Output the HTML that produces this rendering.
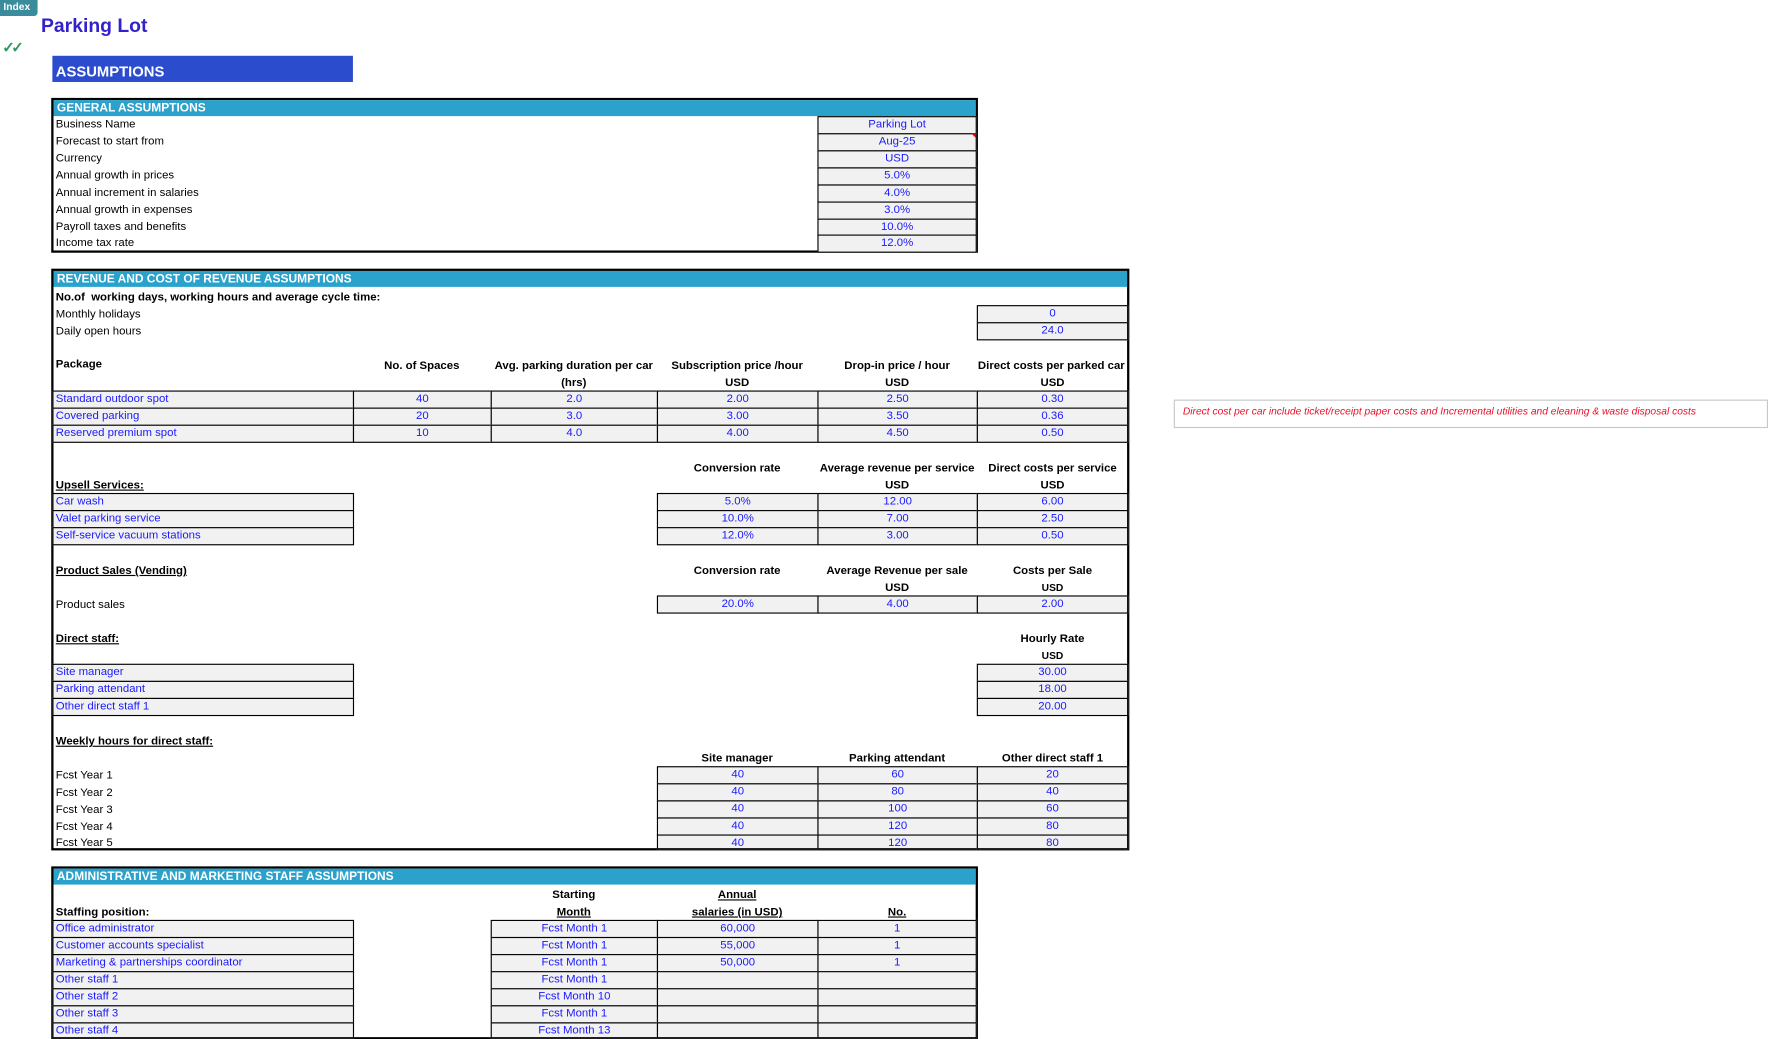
<!DOCTYPE html>
<html><head><meta charset="utf-8">
<style>
html,body{margin:0;padding:0;background:#fff;width:1776px;height:1039px;overflow:hidden}
#w{position:absolute;left:0;top:0;width:1560px;height:913px;transform:scale(1.13846);transform-origin:0 0;font-family:"Liberation Sans",Arial,sans-serif;font-size:10px;color:#000}
.a{position:absolute;white-space:nowrap}
.t{position:absolute;white-space:nowrap;line-height:15px;font-size:10px}
.b{font-weight:bold}
.u{text-decoration:underline}
.hc{position:absolute;white-space:nowrap;line-height:15px;font-weight:bold;text-align:center;font-size:10px}
.c{position:absolute;box-sizing:border-box;border:1px solid #000;background:#f1f1f1;color:#1a1aff;text-align:center;line-height:14px;height:16px;font-size:10px;white-space:nowrap;overflow:hidden}
.l{text-align:left;padding-left:2px}
.tb{position:absolute;box-sizing:border-box;border:2px solid #000}
.hd{position:absolute;background:#2aa2cc;color:#fff;font-weight:bold;font-size:10.5px;line-height:14px;padding-left:3px;box-sizing:border-box;height:14px}
</style></head><body><div id="w">
<div class="a" style="left:0;top:0;width:33px;height:14px;background:#3a8c9c;border-radius:0 0 3px 0;color:#fff;font-weight:bold;font-size:9px;line-height:13px;padding-left:3px;box-sizing:border-box">Index</div>
<div class="a" style="left:36px;top:13px;font-size:17px;font-weight:bold;color:#3322cc">Parking Lot</div>
<div class="a" style="left:2px;top:34px;font-size:13px;color:#2a9a5a;font-weight:bold;letter-spacing:-3px">✓✓</div>
<div class="a" style="left:46px;top:49px;width:264px;height:23px;background:#2b4ccc;color:#fff;font-weight:bold;font-size:13px;line-height:28px;padding-left:3px;box-sizing:border-box">ASSUMPTIONS</div>

<!-- General -->
<div class="tb" style="left:45px;top:86px;width:814px;height:136px"></div>
<div class="hd" style="left:47px;top:88px;width:810px">GENERAL ASSUMPTIONS</div>
<div class="t" style="left:49px;top:102px">Business Name</div>
<div class="t" style="left:49px;top:117px">Forecast to start from</div>
<div class="t" style="left:49px;top:132px">Currency</div>
<div class="t" style="left:49px;top:147px">Annual growth in prices</div>
<div class="t" style="left:49px;top:162px">Annual increment in salaries</div>
<div class="t" style="left:49px;top:177px">Annual growth in expenses</div>
<div class="t" style="left:49px;top:192px">Payroll taxes and benefits</div>
<div class="t" style="left:49px;top:206px">Income tax rate</div>
<div class="c" style="left:718px;top:102px;width:140px">Parking Lot</div>
<div class="c" style="left:718px;top:117px;width:140px">Aug-25</div>
<div class="a" style="left:853px;top:117px;width:0;height:0;border-left:4px solid transparent;border-top:4px solid #d00"></div>
<div class="c" style="left:718px;top:132px;width:140px">USD</div>
<div class="c" style="left:718px;top:147px;width:140px">5.0%</div>
<div class="c" style="left:718px;top:162px;width:140px">4.0%</div>
<div class="c" style="left:718px;top:177px;width:140px">3.0%</div>
<div class="c" style="left:718px;top:192px;width:140px">10.0%</div>
<div class="c" style="left:718px;top:206px;width:140px">12.0%</div>

<!-- Revenue -->
<div class="tb" style="left:45px;top:236px;width:947px;height:511px"></div>
<div class="hd" style="left:47px;top:238px;width:943px">REVENUE AND COST OF REVENUE ASSUMPTIONS</div>
<div class="t b" style="left:49px;top:254px">No.of &nbsp;working days, working hours and average cycle time:</div>
<div class="t" style="left:49px;top:269px">Monthly holidays</div>
<div class="t" style="left:49px;top:284px">Daily open hours</div>
<div class="c" style="left:858px;top:268px;width:133px">0</div>
<div class="c" style="left:858px;top:283px;width:133px">24.0</div>

<div class="t b" style="left:49px;top:313px">Package</div>
<div class="hc" style="left:310px;top:314px;width:121px">No. of Spaces</div>
<div class="hc" style="left:421px;top:314px;width:166px">Avg. parking duration per car</div>
<div class="hc" style="left:431px;top:329px;width:146px">(hrs)</div>
<div class="hc" style="left:577px;top:314px;width:141px">Subscription price /hour</div>
<div class="hc" style="left:577px;top:329px;width:141px">USD</div>
<div class="hc" style="left:718px;top:314px;width:140px">Drop-in price / hour</div>
<div class="hc" style="left:718px;top:329px;width:140px">USD</div>
<div class="hc" style="left:858px;top:314px;width:133px;overflow:hidden;text-align:left;padding-left:1px">Direct costs per parked car</div>
<div class="hc" style="left:858px;top:329px;width:133px">USD</div>

<div class="c l" style="left:46px;top:343px;width:265px">Standard outdoor spot</div>
<div class="c l" style="left:46px;top:358px;width:265px">Covered parking</div>
<div class="c l" style="left:46px;top:373px;width:265px">Reserved premium spot</div>
<div class="c" style="left:310px;top:343px;width:122px">40</div>
<div class="c" style="left:310px;top:358px;width:122px">20</div>
<div class="c" style="left:310px;top:373px;width:122px">10</div>
<div class="c" style="left:431px;top:343px;width:147px">2.0</div>
<div class="c" style="left:431px;top:358px;width:147px">3.0</div>
<div class="c" style="left:431px;top:373px;width:147px">4.0</div>
<div class="c" style="left:577px;top:343px;width:142px">2.00</div>
<div class="c" style="left:577px;top:358px;width:142px">3.00</div>
<div class="c" style="left:577px;top:373px;width:142px">4.00</div>
<div class="c" style="left:718px;top:343px;width:141px">2.50</div>
<div class="c" style="left:718px;top:358px;width:141px">3.50</div>
<div class="c" style="left:718px;top:373px;width:141px">4.50</div>
<div class="c" style="left:858px;top:343px;width:133px">0.30</div>
<div class="c" style="left:858px;top:358px;width:133px">0.36</div>
<div class="c" style="left:858px;top:373px;width:133px">0.50</div>

<div class="hc" style="left:577px;top:404px;width:141px">Conversion rate</div>
<div class="hc" style="left:713px;top:404px;width:150px">Average revenue per service</div>
<div class="hc" style="left:718px;top:419px;width:140px">USD</div>
<div class="hc" style="left:858px;top:404px;width:133px">Direct costs per service</div>
<div class="hc" style="left:858px;top:419px;width:133px">USD</div>
<div class="t b u" style="left:49px;top:419px">Upsell Services:</div>
<div class="c l" style="left:46px;top:433px;width:265px">Car wash</div>
<div class="c l" style="left:46px;top:448px;width:265px">Valet parking service</div>
<div class="c l" style="left:46px;top:463px;width:265px">Self-service vacuum stations</div>
<div class="c" style="left:577px;top:433px;width:142px">5.0%</div>
<div class="c" style="left:577px;top:448px;width:142px">10.0%</div>
<div class="c" style="left:577px;top:463px;width:142px">12.0%</div>
<div class="c" style="left:718px;top:433px;width:141px">12.00</div>
<div class="c" style="left:718px;top:448px;width:141px">7.00</div>
<div class="c" style="left:718px;top:463px;width:141px">3.00</div>
<div class="c" style="left:858px;top:433px;width:133px">6.00</div>
<div class="c" style="left:858px;top:448px;width:133px">2.50</div>
<div class="c" style="left:858px;top:463px;width:133px">0.50</div>

<div class="t b u" style="left:49px;top:494px">Product Sales (Vending)</div>
<div class="hc" style="left:577px;top:494px;width:141px">Conversion rate</div>
<div class="hc" style="left:718px;top:494px;width:140px">Average Revenue per sale</div>
<div class="hc" style="left:718px;top:509px;width:140px">USD</div>
<div class="hc" style="left:858px;top:494px;width:133px">Costs per Sale</div>
<div class="hc" style="left:858px;top:509px;width:133px;font-size:9px">USD</div>
<div class="t" style="left:49px;top:524px">Product sales</div>
<div class="c" style="left:577px;top:523px;width:142px">20.0%</div>
<div class="c" style="left:718px;top:523px;width:141px">4.00</div>
<div class="c" style="left:858px;top:523px;width:133px">2.00</div>

<div class="t b u" style="left:49px;top:554px">Direct staff:</div>
<div class="hc" style="left:858px;top:554px;width:133px">Hourly Rate</div>
<div class="hc" style="left:858px;top:569px;width:133px;font-size:9px">USD</div>
<div class="c l" style="left:46px;top:583px;width:265px">Site manager</div>
<div class="c l" style="left:46px;top:598px;width:265px">Parking attendant</div>
<div class="c l" style="left:46px;top:613px;width:265px">Other direct staff 1</div>
<div class="c" style="left:858px;top:583px;width:133px">30.00</div>
<div class="c" style="left:858px;top:598px;width:133px">18.00</div>
<div class="c" style="left:858px;top:613px;width:133px">20.00</div>

<div class="t b u" style="left:49px;top:644px">Weekly hours for direct staff:</div>
<div class="hc" style="left:577px;top:659px;width:141px">Site manager</div>
<div class="hc" style="left:718px;top:659px;width:140px">Parking attendant</div>
<div class="hc" style="left:858px;top:659px;width:133px">Other direct staff 1</div>
<div class="t" style="left:49px;top:674px">Fcst Year 1</div>
<div class="t" style="left:49px;top:689px">Fcst Year 2</div>
<div class="t" style="left:49px;top:704px">Fcst Year 3</div>
<div class="t" style="left:49px;top:719px">Fcst Year 4</div>
<div class="t" style="left:49px;top:733px">Fcst Year 5</div>
<div class="c" style="left:577px;top:673px;width:142px">40</div>
<div class="c" style="left:577px;top:688px;width:142px">40</div>
<div class="c" style="left:577px;top:703px;width:142px">40</div>
<div class="c" style="left:577px;top:718px;width:142px">40</div>
<div class="c" style="left:577px;top:733px;width:142px;height:13px;line-height:13px">40</div>
<div class="c" style="left:718px;top:673px;width:141px">60</div>
<div class="c" style="left:718px;top:688px;width:141px">80</div>
<div class="c" style="left:718px;top:703px;width:141px">100</div>
<div class="c" style="left:718px;top:718px;width:141px">120</div>
<div class="c" style="left:718px;top:733px;width:141px;height:13px;line-height:13px">120</div>
<div class="c" style="left:858px;top:673px;width:133px">20</div>
<div class="c" style="left:858px;top:688px;width:133px">40</div>
<div class="c" style="left:858px;top:703px;width:133px">60</div>
<div class="c" style="left:858px;top:718px;width:133px">80</div>
<div class="c" style="left:858px;top:733px;width:133px;height:13px;line-height:13px">80</div>

<!-- Admin -->
<div class="tb" style="left:45px;top:761px;width:814px;height:152px"></div>
<div class="hd" style="left:47px;top:763px;width:810px">ADMINISTRATIVE AND MARKETING STAFF ASSUMPTIONS</div>
<div class="hc" style="left:431px;top:779px;width:146px">Starting</div>
<div class="hc u" style="left:431px;top:794px;width:146px">Month</div>
<div class="hc u" style="left:577px;top:779px;width:141px">Annual</div>
<div class="hc u" style="left:577px;top:794px;width:141px">salaries (in USD)</div>
<div class="hc u" style="left:718px;top:794px;width:140px">No.</div>
<div class="t b" style="left:49px;top:794px">Staffing position:</div>
<div class="c l" style="left:46px;top:808px;width:265px">Office administrator</div>
<div class="c l" style="left:46px;top:823px;width:265px">Customer accounts specialist</div>
<div class="c l" style="left:46px;top:838px;width:265px">Marketing &amp; partnerships coordinator</div>
<div class="c l" style="left:46px;top:853px;width:265px">Other staff 1</div>
<div class="c l" style="left:46px;top:868px;width:265px">Other staff 2</div>
<div class="c l" style="left:46px;top:883px;width:265px">Other staff 3</div>
<div class="c l" style="left:46px;top:898px;width:265px;height:14px;line-height:13px">Other staff 4</div>
<div class="c" style="left:431px;top:808px;width:147px">Fcst Month 1</div>
<div class="c" style="left:431px;top:823px;width:147px">Fcst Month 1</div>
<div class="c" style="left:431px;top:838px;width:147px">Fcst Month 1</div>
<div class="c" style="left:431px;top:853px;width:147px">Fcst Month 1</div>
<div class="c" style="left:431px;top:868px;width:147px">Fcst Month 10</div>
<div class="c" style="left:431px;top:883px;width:147px">Fcst Month 1</div>
<div class="c" style="left:431px;top:898px;width:147px;height:14px;line-height:13px">Fcst Month 13</div>
<div class="c" style="left:577px;top:808px;width:142px">60,000</div>
<div class="c" style="left:577px;top:823px;width:142px">55,000</div>
<div class="c" style="left:577px;top:838px;width:142px">50,000</div>
<div class="c" style="left:577px;top:853px;width:142px"></div>
<div class="c" style="left:577px;top:868px;width:142px"></div>
<div class="c" style="left:577px;top:883px;width:142px"></div>
<div class="c" style="left:577px;top:898px;width:142px;height:14px"></div>
<div class="c" style="left:718px;top:808px;width:140px">1</div>
<div class="c" style="left:718px;top:823px;width:140px">1</div>
<div class="c" style="left:718px;top:838px;width:140px">1</div>
<div class="c" style="left:718px;top:853px;width:140px"></div>
<div class="c" style="left:718px;top:868px;width:140px"></div>
<div class="c" style="left:718px;top:883px;width:140px"></div>
<div class="c" style="left:718px;top:898px;width:140px;height:14px"></div>

<!-- Note -->
<div class="a" style="left:1031px;top:351px;width:522px;height:25px;border:1px solid #c8c8c8;box-sizing:border-box;color:#e8102a;font-style:italic;font-size:9px;line-height:19px;padding-left:7px">Direct cost per car include ticket/receipt paper costs and Incremental utilities and eleaning &amp; waste disposal costs</div>
</div></body></html>
